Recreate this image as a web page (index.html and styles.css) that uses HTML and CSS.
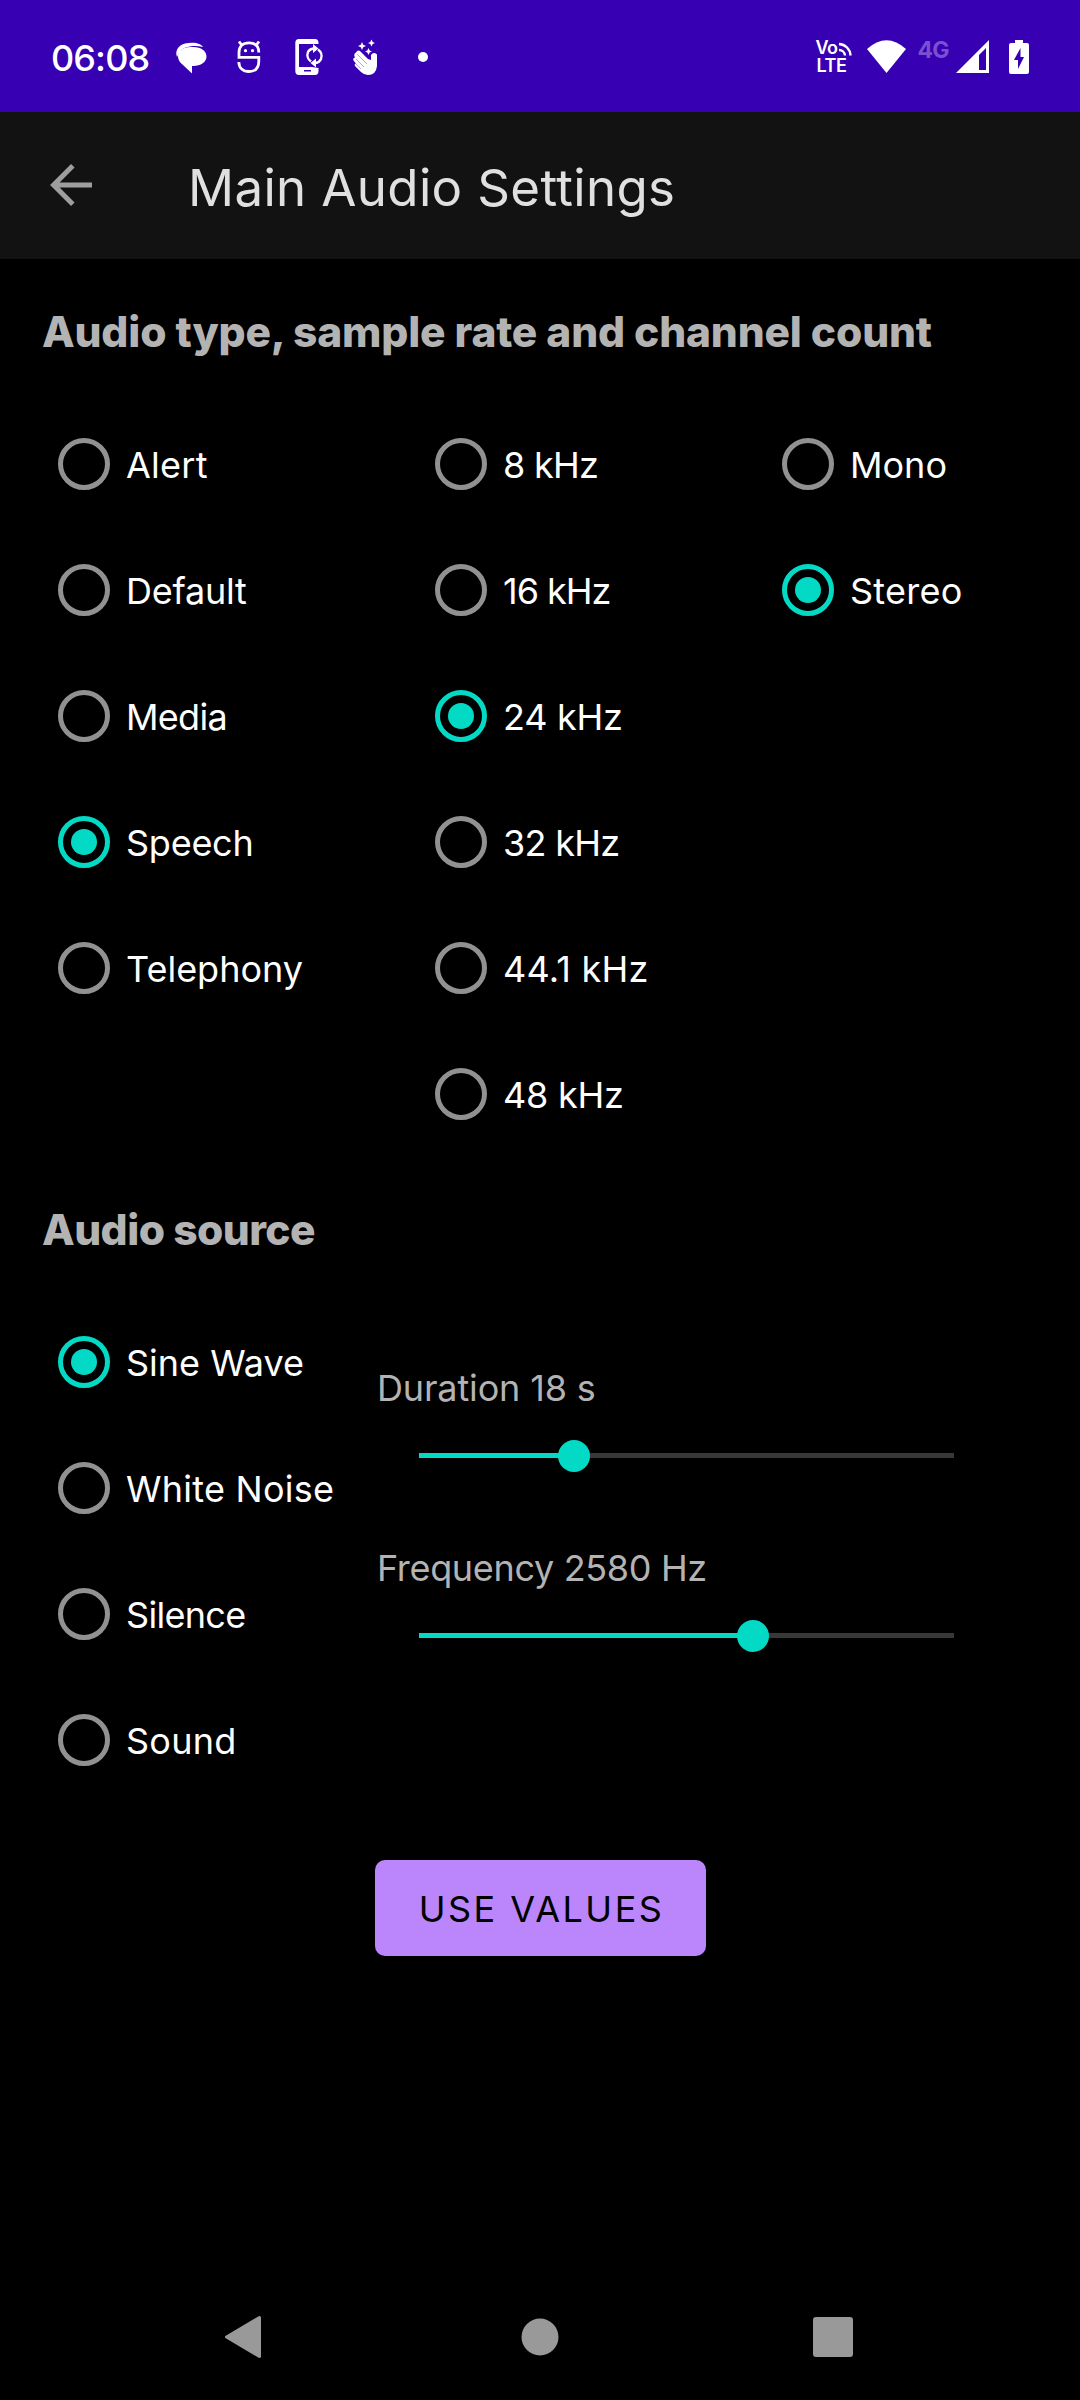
FILE: index.html
```html
<!DOCTYPE html>
<html lang="en">
<head>
<meta charset="utf-8">
<title>Main Audio Settings</title>
<link rel="stylesheet" href="styles.css">
</head>
<body>
<header class="status">
  <span class="clock">06:08</span>
  <svg class="notif" width="280" height="40" viewBox="170 37 280 40" fill="#fff">
    <path d="M177 57C174 49 181 43 189 43C196 42 201 44 203 47C194 45 183 46 179 53Z"/>
    <path d="M190.500 47H193.500C201 47 206.500 51 206.500 56.500C206.500 62 201 66 193 66L192 66V73.500L183 65C179 62 178 59 178 56C178 51 183 47 190.500 47Z"/>
    <g fill="none" stroke="#fff" stroke-width="2.800"><path d="M258.800 52.500C258.800 46 255 42.800 249 42.800C243 42.800 239 46 239 52.500V57.300H258.800V61C258.800 68 255 71.500 249 71.500C243 71.500 239 68 238.800 62"/><path d="M242 45.500L239 41.500M256 45.500L259 41.500"/></g>
    <circle cx="245.500" cy="50.700" r="1.600"/><circle cx="252.500" cy="50.700" r="1.600"/>
    <path fill-rule="evenodd" d="M299 39H315Q318.500 39 318.500 43V44H299V67H312L318.500 68V71Q318.500 75 315 75H299Q295.300 75 295.300 71V43Q295.300 39 299 39ZM304 70V71.500H311V70Z"/>
    <g fill="none" stroke="#fff" stroke-width="2.400"><path d="M311 61.500A8 8 0 0 1 308 52Q309.500 49 313.500 48.500M318 49.500A8 8 0 0 1 321 59Q319.500 62.500 315.500 63"/></g>
    <path d="M313 44L318.500 48.500L313 53ZM316 58.500V67.500L310.500 63Z"/>
    <path d="M356 52.500Q358 49 360.500 51.500L368 59L371 60V55Q373.500 51.500 377 54.500V66Q376 75 368 75Q364 75 361 72L355 66Q354 64 356 63.500L353.500 60.500Q352.500 58 355 57.500Q353 54.500 356 52.500Z"/>
    <path stroke="#a58ade" stroke-width=".8" fill="none" d="M357 54L367 64M356 59L364 67M356 64L361 69"/>
    <path d="M362 42L363.200 44.800L366 46L363.200 47.200L362 50L360.800 47.200L358 46L360.800 44.800ZM371.500 39.500L372.700 42L375 43L372.700 44L371.500 46.500L370.300 44L368 43L370.300 42ZM368.500 48L369.700 50.500L372 51.500L369.700 52.500L368.500 55L367.300 52.500L365 51.500L367.300 50.500Z"/>
    <circle cx="423" cy="57" r="5"/>
  </svg>
  <svg class="system" width="220" height="40" viewBox="812 37 220 40" fill="#fff">
    <text class="volte"><tspan x="815.500" y="54">Vo</tspan><tspan x="816.500" y="72">LTE</tspan></text>
    <path d="M839 44A12 12 0 0 1 850.500 55.500M839 50A6 6 0 0 1 845 55.500" fill="none" stroke="#fff" stroke-width="2.400"/>
    <path d="M867 49Q886.500 31.500 906 49L886.500 73Z"/>
    <text class="net" x="917.500" y="58" textLength="32">4G</text>
    <path fill-rule="evenodd" d="M989 40V73H956ZM986 48L979 55V70H986Z"/>
    <path fill-rule="evenodd" d="M1015 40H1023V43H1027Q1029 43 1029 45V72Q1029 74 1027 74H1011Q1009 74 1009 72V45Q1009 43 1011 43H1015ZM1020.500 48L1014 60H1018V69L1024 57H1020.500Z"/>
  </svg>
</header>
<div class="appbar">
  <svg class="back" width="42" height="42" viewBox="0 0 42 42" fill="none" stroke="#9e9e9e" stroke-width="5"><path d="M42 21H4M22.800 1.800L3.600 21L22.800 40.200"/></svg>
  <h1 class="title">Main Audio Settings</h1>
</div>
<main class="content">
  <h2 class="heading h-type">Audio type, sample rate and channel count</h2>
  <div class="groups">
    <div class="group">
      <div class="radio wide"><i class="ring"></i><span>Alert</span></div>
      <div class="radio snug"><i class="ring"></i><span>Default</span></div>
      <div class="radio tight"><i class="ring"></i><span>Media</span></div>
      <div class="radio snug on"><i class="ring"></i><span>Speech</span></div>
      <div class="radio"><i class="ring"></i><span>Telephony</span></div>
    </div>
    <div class="group">
      <div class="radio tight"><i class="ring"></i><span>8 kHz</span></div>
      <div class="radio tighter"><i class="ring"></i><span>16 kHz</span></div>
      <div class="radio snug on"><i class="ring"></i><span>24 kHz</span></div>
      <div class="radio tight"><i class="ring"></i><span>32 kHz</span></div>
      <div class="radio wide"><i class="ring"></i><span>44.1 kHz</span></div>
      <div class="radio snug"><i class="ring"></i><span>48 kHz</span></div>
    </div>
    <div class="group">
      <div class="radio"><i class="ring"></i><span>Mono</span></div>
      <div class="radio wide on"><i class="ring"></i><span>Stereo</span></div>
    </div>
  </div>
  <h2 class="heading h-source">Audio source</h2>
  <div class="source">
    <div class="group">
      <div class="radio on"><i class="ring"></i><span>Sine Wave</span></div>
      <div class="radio wide"><i class="ring"></i><span>White Noise</span></div>
      <div class="radio tight"><i class="ring"></i><span>Silence</span></div>
      <div class="radio wide"><i class="ring"></i><span>Sound</span></div>
    </div>
    <div class="sliders">
      <div class="setting">
        <span class="caption">Duration 18 s</span>
        <div class="track"><div class="fill" style="width:28.900%"></div><i class="thumb"></i></div>
      </div>
      <div class="setting">
        <span class="caption frequency">Frequency 2580 Hz</span>
        <div class="track"><div class="fill" style="width:62.500%"></div><i class="thumb"></i></div>
      </div>
    </div>
  </div>
  <button class="apply">USE VALUES</button>
</main>
<nav class="navbar">
  <svg width="38" height="44" viewBox="0 0 38 44"><path d="M35.500 2.500L2.500 22L35.500 41.500Z" fill="#999" stroke="#999" stroke-width="3" stroke-linejoin="round"/></svg>
  <svg class="home" width="38" height="38" viewBox="0 0 38 38"><circle cx="19" cy="19" r="18.500" fill="#999"/></svg>
  <svg width="40" height="40" viewBox="0 0 40 40"><rect width="40" height="40" rx="3" fill="#999"/></svg>
</nav>
</body>
</html>
```
FILE: styles.css
```css
* { box-sizing: border-box; }
body {
  margin: 0;
  width: 1080px;
  height: 2400px;
  display: flex;
  flex-direction: column;
  background: #000;
  color: #fff;
  font-family: Inter, "Liberation Sans", sans-serif;
  font-size: 36px;
  overflow: hidden;
}
svg { display: block; flex: none; }
.status {
  height: 112px;
  flex: none;
  display: flex;
  align-items: center;
  padding: 2px 48px 0 51px;
  background: #3700b3;
}
.clock { width: 119px; margin-top: 2px; font-size: 36px; font-weight: 500; letter-spacing: -0.9px; }
.system { margin-left: auto; }
.volte { font: 600 18px Inter, sans-serif; letter-spacing: -0.5px; }
.net { font: 700 23px Inter, sans-serif; fill: #7a50cf; }
.appbar {
  height: 147px;
  flex: none;
  display: flex;
  align-items: center;
  gap: 96px;
  padding-left: 50px;
  background: #121212;
}
.back { margin-top: -1px; }
.title {
  margin: 4px 0 0;
  font-size: 51px;
  font-weight: 400;
  letter-spacing: 0.350px;
  color: #e0e0e0;
  white-space: nowrap;
}
.content {
  flex: 1;
  display: flex;
  flex-direction: column;
  padding: 43px 42px 0;
}
.heading {
  margin: 0;
  height: 60px;
  line-height: 60px;
  font-size: 42.500px;
  font-weight: 800;
  color: #b3b3b3;
  white-space: nowrap;
}
.h-type { letter-spacing: -0.170px; }
.groups { display: flex; margin-top: 39px; height: 756px; }
.groups .group:nth-child(1) { width: 377px; }
.groups .group:nth-child(2) { width: 347px; }
.radio {
  display: flex;
  align-items: center;
  height: 126px;
  padding-left: 16px;
  gap: 16px;
  white-space: nowrap;
}
.radio span { padding-top: 2px; }
.wide { letter-spacing: 0.250px; }
.snug { letter-spacing: -0.250px; }
.tight { letter-spacing: -0.700px; }
.tighter { letter-spacing: -1px; }
.ring {
  width: 52px;
  height: 52px;
  flex: none;
  display: grid;
  place-items: center;
  border: 5px solid #919191;
  border-radius: 50%;
}
.on .ring { border-color: #03dac5; }
.on .ring::after {
  content: "";
  width: 26px;
  height: 26px;
  border-radius: 50%;
  background: #03dac5;
}
.h-source { margin-top: 43px; letter-spacing: -0.550px; }
.source { display: flex; margin-top: 39px; height: 504px; }
.source .group { width: 335px; }
.sliders { padding-top: 59px; }
.setting { height: 180px; display: flex; flex-direction: column; }
.caption {
  height: 60px;
  line-height: 60px;
  letter-spacing: -0.150px;
  color: #b3b3b3;
  white-space: nowrap;
}
.frequency { letter-spacing: -0.330px; }
.track {
  display: flex;
  align-items: center;
  width: 535px;
  height: 5px;
  margin: 35px 0 0 42px;
  background: #383838;
}
.fill { height: 5px; background: #03dac5; }
.thumb {
  width: 32px;
  height: 32px;
  margin-left: -16px;
  flex: none;
  border-radius: 50%;
  background: #03dac5;
}
.apply {
  width: 331px;
  height: 96px;
  margin: 57px 0 0 333px;
  padding: 2px 0 0 2px;
  flex: none;
  border: 0;
  border-radius: 10px;
  background: #bb86fc;
  color: #000;
  font: 400 36px Inter, sans-serif;
  letter-spacing: 2.500px;
  white-space: nowrap;
}
.navbar {
  height: 126px;
  flex: none;
  display: flex;
  align-items: center;
  justify-content: space-between;
  padding: 0 227px 0 224px;
}
.home { margin-left: 5px; }
```
